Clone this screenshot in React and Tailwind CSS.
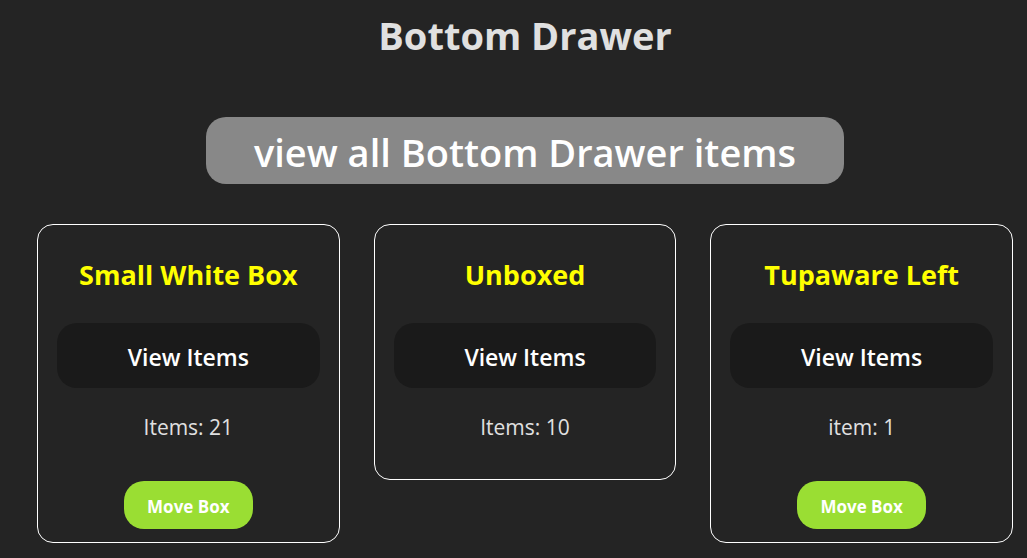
const boxes = [
  { name: "Small White Box", count: "Items: 21", movable: true },
  { name: "Unboxed", count: "Items: 10", movable: false },
  { name: "Tupaware Left", count: "item: 1", movable: true },
];

function BoxCard({ name, count, movable }) {
  return (
    <article className="flex flex-col items-center rounded-2xl border border-white px-[19px] pt-[30px] pb-[13px] text-center">
      <h2 className="text-[27px] leading-[40px] font-bold whitespace-nowrap text-[#ffff00]">{name}</h2>
      <button
        type="button"
        className="mt-7 h-[65px] w-full cursor-pointer rounded-[20px] bg-[#1a1a1a] pt-0.5 text-[23px] leading-8 font-semibold text-white"
      >
        View Items
      </button>
      <p className="mt-[23px] mb-[23px] text-[21px] leading-8">{count}</p>
      {movable && (
        <button
          type="button"
          className="mt-[15px] h-12 cursor-pointer rounded-[20px] bg-[#9ade33] px-[23px] pt-1 text-[17px] leading-6 font-bold text-white"
        >
          Move Box
        </button>
      )}
    </article>
  );
}

export default function App() {
  return (
    <main className="flex min-h-screen flex-col items-center bg-[#242424] pt-2 pr-[14px] pb-[15px] pl-[37px] font-['Open_Sans','Noto_Sans',sans-serif] text-[#e0e0e0]">
      <h1 className="text-center text-[38px] leading-[54px] font-bold">Bottom Drawer</h1>
      <button
        type="button"
        className="mt-[55px] min-h-[67px] cursor-pointer rounded-[20px] bg-[#888888] px-12 pt-0.5 text-[38px] leading-[54px] font-semibold text-white"
      >
        view all Bottom Drawer items
      </button>
      <section className="mt-10 grid w-full grid-cols-[repeat(auto-fit,minmax(290px,1fr))] items-start gap-x-[34px] gap-y-8">
        {boxes.map((box) => (
          <BoxCard key={box.name} {...box} />
        ))}
      </section>
    </main>
  );
}
